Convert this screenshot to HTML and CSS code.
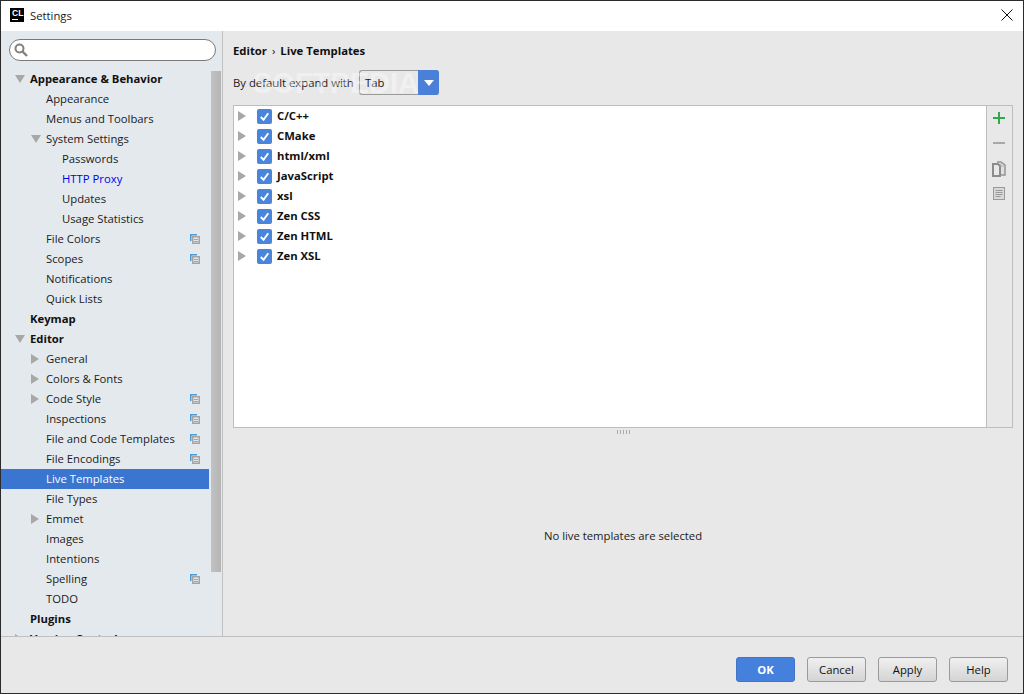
FILE: index.html
```html
<!DOCTYPE html>
<html lang="en">
<head>
<meta charset="utf-8">
<title>Settings</title>
<link rel="stylesheet" href="styles.css">
</head>
<body>
<div class="window">
  <header class="titlebar">
    <div class="logo"><span class="logo-text">CL</span><span class="logo-bar"></span></div>
    <span class="title">Settings</span>
    <svg class="close" width="12" height="12" viewBox="0 0 12 12"><path d="M.5.5l11 11M11.500.5l-11 11" stroke="#111" fill="none"/></svg>
  </header>
  <div class="main">
    <aside class="sidebar">
      <div class="search">
        <svg width="16" height="16" viewBox="0 0 16 16"><circle cx="6.500" cy="6.500" r="4" fill="none" stroke="#808080" stroke-width="2"/><path d="M9.500 9.500l4.500 4.500" stroke="#808080" stroke-width="2.400"/></svg>
      </div>
      <div class="tree-wrap">
        <nav class="tree">
          <div class="row l0 b"><i class="tri down"></i>Appearance &amp; Behavior</div>
          <div class="row l1">Appearance</div>
          <div class="row l1">Menus and Toolbars</div>
          <div class="row l1"><i class="tri down"></i>System Settings</div>
          <div class="row l2">Passwords</div>
          <div class="row l2 link">HTTP Proxy</div>
          <div class="row l2">Updates</div>
          <div class="row l2">Usage Statistics</div>
          <div class="row l1">File Colors<svg class="proj" width="10" height="10" viewBox="0 0 10 10"><path d="M.75 7V.75H7" fill="none" stroke="#4a9bd4" stroke-width="1.500"/><rect x="2.750" y="2.750" width="6.500" height="6.500" fill="#e4e9ee" stroke="#a4a4a4" stroke-width="1.500"/><path d="M4 5.500h4M4 7.500h4" stroke="#a4a4a4"/></svg></div>
          <div class="row l1">Scopes<svg class="proj" width="10" height="10" viewBox="0 0 10 10"><path d="M.75 7V.75H7" fill="none" stroke="#4a9bd4" stroke-width="1.500"/><rect x="2.750" y="2.750" width="6.500" height="6.500" fill="#e4e9ee" stroke="#a4a4a4" stroke-width="1.500"/><path d="M4 5.500h4M4 7.500h4" stroke="#a4a4a4"/></svg></div>
          <div class="row l1">Notifications</div>
          <div class="row l1">Quick Lists</div>
          <div class="row l0 b">Keymap</div>
          <div class="row l0 b"><i class="tri down"></i>Editor</div>
          <div class="row l1"><i class="tri right"></i>General</div>
          <div class="row l1"><i class="tri right"></i>Colors &amp; Fonts</div>
          <div class="row l1"><i class="tri right"></i>Code Style<svg class="proj" width="10" height="10" viewBox="0 0 10 10"><path d="M.75 7V.75H7" fill="none" stroke="#4a9bd4" stroke-width="1.500"/><rect x="2.750" y="2.750" width="6.500" height="6.500" fill="#e4e9ee" stroke="#a4a4a4" stroke-width="1.500"/><path d="M4 5.500h4M4 7.500h4" stroke="#a4a4a4"/></svg></div>
          <div class="row l1">Inspections<svg class="proj" width="10" height="10" viewBox="0 0 10 10"><path d="M.75 7V.75H7" fill="none" stroke="#4a9bd4" stroke-width="1.500"/><rect x="2.750" y="2.750" width="6.500" height="6.500" fill="#e4e9ee" stroke="#a4a4a4" stroke-width="1.500"/><path d="M4 5.500h4M4 7.500h4" stroke="#a4a4a4"/></svg></div>
          <div class="row l1">File and Code Templates<svg class="proj" width="10" height="10" viewBox="0 0 10 10"><path d="M.75 7V.75H7" fill="none" stroke="#4a9bd4" stroke-width="1.500"/><rect x="2.750" y="2.750" width="6.500" height="6.500" fill="#e4e9ee" stroke="#a4a4a4" stroke-width="1.500"/><path d="M4 5.500h4M4 7.500h4" stroke="#a4a4a4"/></svg></div>
          <div class="row l1">File Encodings<svg class="proj" width="10" height="10" viewBox="0 0 10 10"><path d="M.75 7V.75H7" fill="none" stroke="#4a9bd4" stroke-width="1.500"/><rect x="2.750" y="2.750" width="6.500" height="6.500" fill="#e4e9ee" stroke="#a4a4a4" stroke-width="1.500"/><path d="M4 5.500h4M4 7.500h4" stroke="#a4a4a4"/></svg></div>
          <div class="row l1 selected">Live Templates</div>
          <div class="row l1">File Types</div>
          <div class="row l1"><i class="tri right"></i>Emmet</div>
          <div class="row l1">Images</div>
          <div class="row l1">Intentions</div>
          <div class="row l1">Spelling<svg class="proj" width="10" height="10" viewBox="0 0 10 10"><path d="M.75 7V.75H7" fill="none" stroke="#4a9bd4" stroke-width="1.500"/><rect x="2.750" y="2.750" width="6.500" height="6.500" fill="#e4e9ee" stroke="#a4a4a4" stroke-width="1.500"/><path d="M4 5.500h4M4 7.500h4" stroke="#a4a4a4"/></svg></div>
          <div class="row l1">TODO</div>
          <div class="row l0 b">Plugins</div>
          <div class="row l0 b"><i class="tri right"></i>Version Control</div>
        </nav>
        <div class="scrollbar"><div class="thumb"></div></div>
      </div>
    </aside>
    <section class="content">
      <div class="crumbs"><b>Editor</b><span class="sep">›</span><b>Live Templates</b></div>
      <div class="expand">
        <span class="expand-label">By default expand with</span>
        <div class="combo">
          <span class="combo-value">Tab</span>
          <span class="combo-btn"><i class="combo-arrow"></i></span>
        </div>
        <span class="watermark">SOFTPEDIA</span>
      </div>
      <div class="table">
        <div class="list">
          <div class="item"><i class="tri right"></i><i class="check"><svg width="16" height="16" viewBox="0 0 16 16"><path d="M4 8.500l3 3 5-7" fill="none" stroke="#fff" stroke-width="2"/></svg></i><b>C/C++</b></div>
          <div class="item"><i class="tri right"></i><i class="check"><svg width="16" height="16" viewBox="0 0 16 16"><path d="M4 8.500l3 3 5-7" fill="none" stroke="#fff" stroke-width="2"/></svg></i><b>CMake</b></div>
          <div class="item"><i class="tri right"></i><i class="check"><svg width="16" height="16" viewBox="0 0 16 16"><path d="M4 8.500l3 3 5-7" fill="none" stroke="#fff" stroke-width="2"/></svg></i><b>html/xml</b></div>
          <div class="item"><i class="tri right"></i><i class="check"><svg width="16" height="16" viewBox="0 0 16 16"><path d="M4 8.500l3 3 5-7" fill="none" stroke="#fff" stroke-width="2"/></svg></i><b>JavaScript</b></div>
          <div class="item"><i class="tri right"></i><i class="check"><svg width="16" height="16" viewBox="0 0 16 16"><path d="M4 8.500l3 3 5-7" fill="none" stroke="#fff" stroke-width="2"/></svg></i><b>xsl</b></div>
          <div class="item"><i class="tri right"></i><i class="check"><svg width="16" height="16" viewBox="0 0 16 16"><path d="M4 8.500l3 3 5-7" fill="none" stroke="#fff" stroke-width="2"/></svg></i><b>Zen CSS</b></div>
          <div class="item"><i class="tri right"></i><i class="check"><svg width="16" height="16" viewBox="0 0 16 16"><path d="M4 8.500l3 3 5-7" fill="none" stroke="#fff" stroke-width="2"/></svg></i><b>Zen HTML</b></div>
          <div class="item"><i class="tri right"></i><i class="check"><svg width="16" height="16" viewBox="0 0 16 16"><path d="M4 8.500l3 3 5-7" fill="none" stroke="#fff" stroke-width="2"/></svg></i><b>Zen XSL</b></div>
        </div>
        <div class="tools">
          <svg width="14" height="14" viewBox="0 0 14 14"><path d="M7 1v12M1 7h12" stroke="#2fa84f" stroke-width="2"/></svg>
          <svg width="14" height="14" viewBox="0 0 14 14"><path d="M1 7h12" stroke="#a8a8a8" stroke-width="2"/></svg>
          <svg width="14" height="16" viewBox="0 0 14 16"><path d="M5 1h4l4 3v10H8" fill="#e0e0e0" stroke="#949494" stroke-width="1.500"/><path d="M1 3h5l2 2v10H1z" fill="#e8e8e8" stroke="#8c8c8c" stroke-width="2"/><path d="M9 1v4h4" fill="none" stroke="#b4b4b4"/></svg>
          <svg width="12" height="13" viewBox="0 0 12 13"><rect x=".5" y=".5" width="11" height="12" fill="#d8d8d8" stroke="#9a9a9a"/><path d="M2.500 3.500h7M2.500 5.500h7M2.500 7.500h7M2.500 9.500h5" stroke="#9a9a9a"/></svg>
        </div>
      </div>
      <div class="splitter"><span class="grip"></span></div>
      <div class="empty">No live templates are selected</div>
    </section>
  </div>
  <footer class="footer">
    <button class="btn primary">OK</button>
    <button class="btn">Cancel</button>
    <button class="btn">Apply</button>
    <button class="btn">Help</button>
  </footer>
</div>
</body>
</html>
```
FILE: styles.css
```css
* { box-sizing: border-box; }
html, body { margin: 0; height: 100%; overflow: hidden; }
body { font: 11.3px "Open Sans", "Noto Sans", sans-serif; color: #1a1a1a; }
.window {
  width: 1024px; height: 694px; display: flex; flex-direction: column;
  border: 1px solid #2b2b2b; background: #e8e8e8;
}
.titlebar {
  height: 30px; background: #fff; display: flex; align-items: center;
  padding: 0 10px 2px 9px; flex: none;
}
.logo { width: 14px; height: 14px; background: #000; position: relative; margin-right: 6px; }
.logo-text { position: absolute; left: 2px; top: 0; font: bold 8.500px/10px "Liberation Sans", sans-serif; color: #fff; }
.logo-bar { position: absolute; left: 2px; bottom: 2px; width: 6px; height: 1px; background: #fff; }
.title { flex: 1; }
.main { flex: 1; display: flex; min-height: 0; border-bottom: 1px solid #c0c0c0; }
.sidebar {
  width: 222px; flex: none; background: #e4e9ee; border-right: 1px solid #c0c0c0;
  display: flex; flex-direction: column; overflow: hidden;
}
.search {
  margin: 8px 6px 8px 8px; height: 22px; flex: none; background: #fff;
  border: 1px solid #7a7a7a; border-radius: 11px; padding: 2px 0 0 3px;
}
.search svg { display: block; }
.tree-wrap { flex: 1; display: flex; min-height: 0; }
.tree { width: 208px; flex: none; }
.row { height: 20px; line-height: 20px; position: relative; white-space: nowrap; }
.l0 { padding-left: 29px; }
.l1 { padding-left: 45px; }
.l2 { padding-left: 61px; }
.b { font-weight: 700; color: #111; }
.link { color: #0000ee; }
.selected { background: #3a75d0; color: #fff; }
.tri { position: absolute; width: 0; height: 0; border-style: solid; border-color: transparent; }
.tri.down { border-width: 8px 5px 0; border-top-color: #a8a8a8; top: 6px; }
.tri.right { border-width: 5px 0 5px 8px; border-left-color: #a8a8a8; top: 5px; }
.l0 .tri { left: 14px; }
.l1 .tri { left: 30px; }
.proj { position: absolute; left: 189px; top: 5px; }
.scrollbar { width: 10px; margin-left: 2px; }
.thumb { height: 501px; margin-top: 2px; background: linear-gradient(90deg, #c2c2c2, #b4b4b4); }
.content { flex: 1; min-width: 0; padding: 0 10px; display: flex; flex-direction: column; }
.crumbs { height: 39px; padding-top: 10px; line-height: 20px; flex: none; color: #111; display: flex; }
.sep { margin: 0 5px; }
.expand { height: 25px; display: flex; align-items: center; flex: none; position: relative; }
.expand-label { width: 126px; flex: none; }
.combo {
  width: 80px; height: 25px; display: flex;
  border: 1px solid #9a9a9a; border-right: 0; border-radius: 3px; background: #e8e8e8;
}
.combo-value { flex: 1; padding-left: 5px; line-height: 23px; }
.combo-btn {
  width: 21px; margin: -1px 0; background: #4a80d8; border-radius: 0 3px 3px 0;
  display: flex; align-items: center; justify-content: center;
}
.combo-arrow { width: 0; height: 0; border-style: solid; border-width: 6px 5px 0; border-color: #fff transparent transparent; }
.watermark {
  position: absolute; left: 20px; top: -2px; font: 700 29px/30px "Liberation Sans", sans-serif;
  color: rgba(255,255,255,.4); pointer-events: none;
}
.table {
  margin-top: 10px; height: 323px; flex: none; display: flex;
  border: 1px solid #bdbdbd; background: #fff;
}
.list { flex: 1; }
.item { height: 20px; display: flex; align-items: center; position: relative; padding-left: 23px; color: #111; }
.item .tri { left: 4px; }
.item b { margin-top: -1px; }
.check { width: 15px; height: 15px; background: #4a85dc; border-radius: 2px; margin-right: 5px; display: block; }
.check svg { display: block; width: 15px; height: 15px; }
.tools {
  width: 26px; flex: none; background: #e8e8e8; border-left: 1px solid #bdbdbd;
  display: flex; flex-direction: column; align-items: center; padding: 5px 1px 0 0; gap: 11px;
}
.tools svg { display: block; }
.tools svg:last-child { margin-top: -1px; }
.splitter { height: 8px; flex: none; display: flex; justify-content: center; align-items: center; }
.grip { width: 15px; height: 4px; background: radial-gradient(circle, #aaa 1px, transparent 1px) 0 0 / 3px 2px; }
.empty { flex: 1; display: flex; align-items: center; justify-content: center; padding-bottom: 2px; }
.footer {
  height: 56px; flex: none; display: flex; justify-content: flex-end; gap: 12px;
  padding: 20px 15px 0 0;
}
.btn {
  width: 59px; height: 25px; font: inherit; color: #111; border: 1px solid #9a9a9a; border-radius: 3px;
  background: linear-gradient(#f0f0f0, #d4d4d4); padding: 0;
}
.btn.primary { background: #4480dc; border-color: #4274c4; color: #fff; font-weight: 700; }
```
